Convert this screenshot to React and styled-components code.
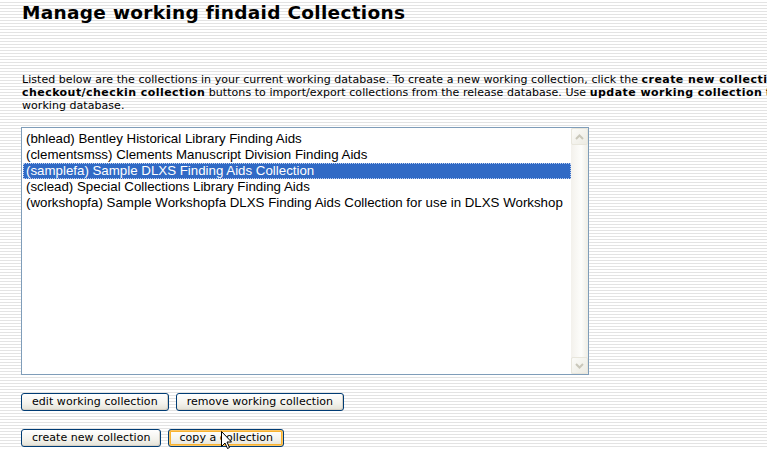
import styled, { createGlobalStyle } from "styled-components";

const GlobalStyle = createGlobalStyle`
  html, body {
    margin: 0;
    padding: 0;
    overflow: hidden;
  }
  body {
    background: repeating-linear-gradient(
      to bottom,
      #ffffff 0px,
      #ffffff 2px,
      #e3e3e3 2px,
      #e3e3e3 3px
    );
    font-family: "DejaVu Sans", Verdana, sans-serif;
    color: #000;
    width: 767px;
    height: 449px;
  }
`;

const Page = styled.div`
  position: relative;
  padding: 2px 0 0 21px;
  height: 449px;
  box-sizing: border-box;
`;

const Title = styled.h1`
  margin: 0 0 0 1px;
  font-size: 18.5px;
  font-weight: bold;
  line-height: 22px;
  letter-spacing: 0.3px;
`;

const Intro = styled.p`
  margin: 49px 0 0 1px;
  font-size: 11px;
  line-height: 13px;
  letter-spacing: 0.05px;
  white-space: nowrap;
  & b {
    font-weight: bold;
    letter-spacing: 0.45px;
  }
`;

const ListBox = styled.div`
  margin-top: 15px;
  width: 568px;
  height: 248px;
  box-sizing: border-box;
  border: 1px solid #7f9db9;
  background: #fff;
  display: flex;
`;

const Items = styled.ul`
  flex: 1;
  margin: 0;
  padding: 3px 0 0 1px;
  list-style: none;
  font-family: "Liberation Sans", Arial, sans-serif;
  font-size: 13.3px;
`;

const Item = styled.li`
  height: 16px;
  line-height: 16px;
  padding-left: 3px;
  white-space: nowrap;
  box-sizing: border-box;
  background: ${(p) => (p.$selected ? "#316ac5" : "transparent")};
  color: ${(p) => (p.$selected ? "#fff" : "#000")};
  outline: ${(p) => (p.$selected ? "1px dotted #c0d0ee" : "none")};
  outline-offset: -1px;
`;

const ScrollBar = styled.div`
  width: 17px;
  display: flex;
  flex-direction: column;
  justify-content: space-between;
  background: linear-gradient(to right, #f3f1ec, #fdfdfb 60%, #eeede5);
`;

const ScrollButton = styled.div`
  height: 17px;
  box-sizing: border-box;
  border: 1px solid #e8e6dc;
  border-radius: 2px;
  background: linear-gradient(to bottom right, #fbfbf8, #ecebe3);
  display: flex;
  align-items: center;
  justify-content: center;
`;

const ButtonRow = styled.div`
  display: flex;
  gap: 7px;
  margin-top: ${(p) => p.$top}px;
`;

const Button = styled.button`
  height: 18px;
  padding: 0 10px;
  font-family: "DejaVu Sans", Verdana, sans-serif;
  font-size: 11px;
  line-height: 14px;
  letter-spacing: 0.05px;
  color: #000;
  border: 1px solid #003c74;
  border-radius: 3px;
  background: linear-gradient(to bottom, #ffffff 0%, #f3f2ec 60%, #e3e1d6 100%);
  box-shadow: ${(p) =>
    p.$hover
      ? "inset 0 0 0 1px #fcc666, inset 0 0 0 2px #f8b330"
      : "inset -1px -1px 0 #d6d0c4"};
  cursor: default;
`;

const Cursor = styled.svg`
  position: absolute;
  left: 221px;
  top: 431px;
`;

function Chevron({ up }) {
  return (
    <svg width="9" height="6" viewBox="0 0 9 6">
      <path
        d={up ? "M1 5 L4.5 1.5 L8 5" : "M1 1 L4.5 4.5 L8 1"}
        fill="none"
        stroke="#c9c7ba"
        strokeWidth="2"
      />
    </svg>
  );
}

const collections = [
  "(bhlead) Bentley Historical Library Finding Aids",
  "(clementsmss) Clements Manuscript Division Finding Aids",
  "(samplefa) Sample DLXS Finding Aids Collection",
  "(sclead) Special Collections Library Finding Aids",
  "(workshopfa) Sample Workshopfa DLXS Finding Aids Collection for use in DLXS Workshop",
];

export default function App() {
  return (
    <>
      <GlobalStyle />
      <Page>
        <Title>Manage working findaid Collections</Title>
        <Intro>
          Listed below are the collections in your current working database. To create a new
          working collection, click the <b>create new collection</b> button. Use the
          <br />
          <b>checkout/checkin collection</b> buttons to import/export collections from the
          release database. Use <b>update working collection</b> to refresh a collection in the
          <br />
          working database.
        </Intro>
        <ListBox>
          <Items>
            {collections.map((c, i) => (
              <Item key={c} $selected={i === 2}>
                {c}
              </Item>
            ))}
          </Items>
          <ScrollBar>
            <ScrollButton>
              <Chevron up />
            </ScrollButton>
            <ScrollButton>
              <Chevron />
            </ScrollButton>
          </ScrollBar>
        </ListBox>
        <ButtonRow $top={18}>
          <Button>edit working collection</Button>
          <Button>remove working collection</Button>
        </ButtonRow>
        <ButtonRow $top={18}>
          <Button>create new collection</Button>
          <Button $hover>copy a collection</Button>
        </ButtonRow>
        <Cursor width="12" height="19" viewBox="0 0 12 19">
          <path
            d="M0.5 0.5 L0.5 15.5 L4 12 L6.5 17.5 L8.5 16.5 L6 11 L10.5 11 Z"
            fill="#fff"
            stroke="#000"
            strokeWidth="1"
          />
        </Cursor>
      </Page>
    </>
  );
}
